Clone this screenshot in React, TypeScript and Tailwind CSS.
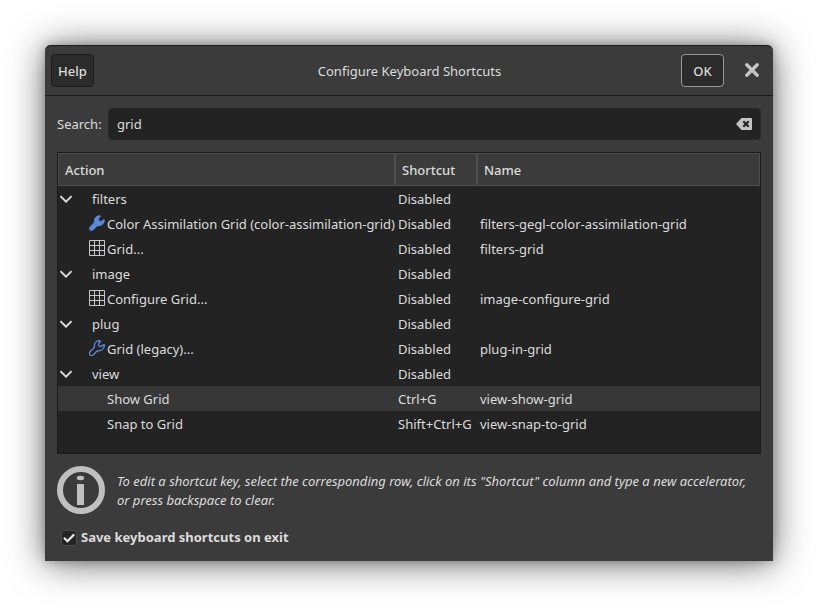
import React, { useState } from "react";

type IconName = "wrench" | "wrench-outline" | "grid";

interface Row {
  label: string;
  shortcut: string;
  name?: string;
  group?: boolean;
  icon?: IconName;
  selected?: boolean;
}

const rows: Row[] = [
  { label: "filters", shortcut: "Disabled", group: true },
  {
    label: "Color Assimilation Grid (color-assimilation-grid)",
    shortcut: "Disabled",
    name: "filters-gegl-color-assimilation-grid",
    icon: "wrench",
  },
  { label: "Grid...", shortcut: "Disabled", name: "filters-grid", icon: "grid" },
  { label: "image", shortcut: "Disabled", group: true },
  { label: "Configure Grid...", shortcut: "Disabled", name: "image-configure-grid", icon: "grid" },
  { label: "plug", shortcut: "Disabled", group: true },
  { label: "Grid (legacy)...", shortcut: "Disabled", name: "plug-in-grid", icon: "wrench-outline" },
  { label: "view", shortcut: "Disabled", group: true },
  { label: "Show Grid", shortcut: "Ctrl+G", name: "view-show-grid", selected: true },
  { label: "Snap to Grid", shortcut: "Shift+Ctrl+G", name: "view-snap-to-grid" },
];

const wrenchPath =
  "M10.6 0.6C7.6 0.8 5.4 3 5.4 5.6C5.5 6.8 5.4 7.4 4.8 8L1.2 11.6C0.3 12.6 0.3 14 1 14.9C1.9 15.8 3.4 15.7 4.4 14.8L7.6 11.4C8.2 10.9 9 10.7 10 10.7C12.8 10.6 15.2 8.4 15.4 5.2C15.4 4.6 14.8 4.4 14.3 4.8C13.4 5.8 12.6 6.5 11.6 6.5C10.4 6.4 9.4 5.2 9.6 4.2C9.8 3 10.5 2.4 11.2 1.5C11.5 1 11.2 0.6 10.6 0.6Z";

function RowIcon({ icon }: { icon?: IconName }) {
  if (icon === "grid") {
    return (
      <svg className="size-4" viewBox="0 0 16 16" fill="none" stroke="#c8c8c8" aria-hidden="true">
        <path d="M0.5 0.5H15.5V15.5H0.5ZM5.5 0.5V15.5M10.5 0.5V15.5M0.5 5.5H15.5M0.5 10.5H15.5" />
      </svg>
    );
  }
  if (icon === "wrench") {
    return (
      <svg className="size-4" viewBox="0 0 16 16" aria-hidden="true">
        <path d={wrenchPath} fill="#5a87d6" stroke="#5a87d6" strokeWidth="0.9" strokeLinejoin="round" />
      </svg>
    );
  }
  if (icon === "wrench-outline") {
    return (
      <svg className="size-4" viewBox="0 0 16 16" aria-hidden="true">
        <path d={wrenchPath} fill="none" stroke="#5a87d6" strokeWidth="1.4" strokeLinejoin="round" />
      </svg>
    );
  }
  return null;
}

function ActionRow({ row }: { row: Row }) {
  return (
    <tr className={row.selected ? "h-[25px] bg-[#373737]" : "h-[25px]"}>
      <td className="p-0">
        {row.group ? (
          <div className="flex items-center">
            <button type="button" aria-label={`Collapse ${row.label}`} className="w-[34px] pl-0.5">
              <svg className="h-3 w-3" viewBox="0 0 12 12" fill="none" stroke="#dcdcdc" strokeWidth="2" aria-hidden="true">
                <path d="M0.4 3.1L6 8.6L11.6 3.1" />
              </svg>
            </button>
            <span className="pt-0.5">{row.label}</span>
          </div>
        ) : (
          <div className="flex items-center pl-[31px]">
            <span className="mr-0.5 h-[18px] w-4">
              <RowIcon icon={row.icon} />
            </span>
            <span className="pt-0.5">{row.label}</span>
          </div>
        )}
      </td>
      <td className="px-[3px] pt-0.5 pb-0">{row.shortcut}</td>
      <td className="px-[3px] pt-0.5 pb-0">{row.name}</td>
    </tr>
  );
}

const headCell = "border border-[#4d4d4d] bg-[#3b3b3b] px-1.5 pt-0.5 pb-0 text-left font-medium";

export default function App() {
  const [query, setQuery] = useState("grid");
  const [save, setSave] = useState(true);

  return (
    <div className="flex min-h-screen bg-white p-[45px] font-['Noto_Sans',sans-serif] text-[13px] leading-[19px] text-[#dcdcdc]">
      <main className="flex flex-1 flex-col rounded-t-md bg-[#3b3b3b] shadow-[0_2px_36px_rgba(0,0,0,0.6),0_0_10px_rgba(0,0,0,0.25)]">
        <header className="flex h-[51px] items-center rounded-t-md border-y border-[#1b1b1b] pr-[5px] pl-1.5">
          <div className="flex flex-1">
            <button type="button" className="h-[33px] w-[43px] rounded border border-[#1b1b1b] bg-[#2b2b2b] pt-0.5 font-medium">
              Help
            </button>
          </div>
          <h1 className="pt-0.5">Configure Keyboard Shortcuts</h1>
          <div className="flex flex-1 items-center justify-end">
            <button type="button" className="h-[33px] w-[43px] rounded border border-[#999999] bg-[#2b2b2b] pt-0.5 font-medium">
              OK
            </button>
            <button type="button" aria-label="Close" className="ml-3 flex h-[33px] w-8 items-center justify-center">
              <svg className="size-4" viewBox="0 0 16 16" stroke="#c4c4c4" strokeWidth="3.4" strokeLinecap="round" aria-hidden="true">
                <path d="M2.8 1.8L13.2 12.2M13.2 1.8L2.8 12.2" />
              </svg>
            </button>
          </div>
        </header>

        <div className="flex flex-1 flex-col gap-3 p-3">
          <div className="flex items-center gap-1.5">
            <label htmlFor="search" className="w-[45px]">
              Search:
            </label>
            <div className="flex h-8 flex-1 items-center rounded border border-[#282828] bg-[#232323] px-2">
              <input
                id="search"
                type="text"
                value={query}
                onChange={(e) => setQuery(e.target.value)}
                className="min-w-0 flex-1 bg-transparent outline-none"
              />
              <button type="button" aria-label="Clear search" onClick={() => setQuery("")}>
                <svg className="size-4" viewBox="0 0 16 16" aria-hidden="true">
                  <path d="M5.5 2H15Q16 2 16 3V13Q16 14 15 14H5.5L0 8Z" fill="#c4c4c4" />
                  <path d="M7.3 5.3L12.7 10.7M12.7 5.3L7.3 10.7" stroke="#232323" strokeWidth="2.2" />
                </svg>
              </button>
            </div>
          </div>

          <div className="flex-1 border border-[#1b1b1b] bg-[#232323]">
            <table className="w-full table-fixed border-separate border-spacing-0">
              <colgroup>
                <col className="w-[337px]" />
                <col className="w-[82px]" />
                <col />
              </colgroup>
              <thead>
                <tr className="h-[33px]">
                  <th className={headCell}>Action</th>
                  <th className={headCell}>Shortcut</th>
                  <th className={headCell}>Name</th>
                </tr>
              </thead>
              <tbody className="whitespace-nowrap">
                {rows.map((row) => (
                  <ActionRow key={row.label} row={row} />
                ))}
              </tbody>
            </table>
          </div>

          <div className="flex items-center gap-3">
            <svg className="size-12 shrink-0" viewBox="0 0 48 48" aria-hidden="true">
              <circle cx="24" cy="24" r="21" fill="none" stroke="#c0c0c0" strokeWidth="6" />
              <ellipse cx="23.5" cy="12" rx="3.7" ry="2.2" fill="#c0c0c0" />
              <rect x="20" y="18" width="7" height="21" fill="#c0c0c0" />
            </svg>
            <p className="pt-0.5 italic">
              To edit a shortcut key, select the corresponding row, click on its "Shortcut" column and type a new
              accelerator, or press backspace to clear.
            </p>
          </div>

          <label className="flex h-[23px] items-center gap-1 pl-1 font-bold">
            <span className="grid size-4">
              <input
                type="checkbox"
                checked={save}
                onChange={(e) => setSave(e.target.checked)}
                className="peer col-start-1 row-start-1 size-4 appearance-none rounded border border-[#4a4a4a] bg-[#232323]"
              />
              <svg
                className="pointer-events-none invisible col-start-1 row-start-1 size-4 peer-checked:visible"
                viewBox="0 0 16 16"
                fill="none"
                stroke="#e6e6e6"
                strokeWidth="2.2"
                aria-hidden="true"
              >
                <path d="M3 7.8L6.4 11.2L13.2 4.4" />
              </svg>
            </span>
            Save keyboard shortcuts on exit
          </label>
        </div>
      </main>
    </div>
  );
}
